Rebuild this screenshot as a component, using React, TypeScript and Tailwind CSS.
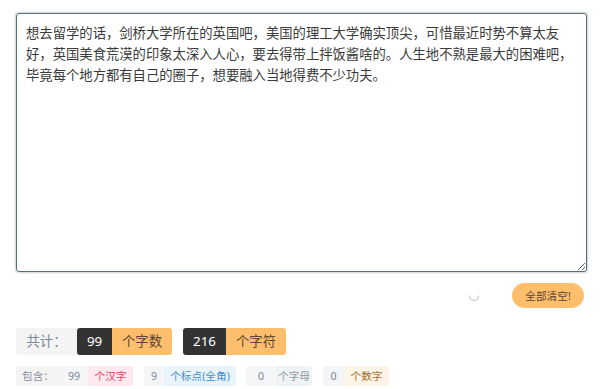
import React from "react";

const TEXT =
  "想去留学的话，剑桥大学所在的英国吧，美国的理工大学确实顶尖，可惜最近时势不算太友好，英国美食荒漠的印象太深入人心，要去得带上拌饭酱啥的。人生地不熟是最大的困难吧，毕竟每个地方都有自己的圈子，想要融入当地得费不少功夫。";

const font = { fontFamily: '"Noto Sans", "Noto Sans CJK SC", sans-serif' };

export default function App() {
  return (
    <div className="w-[600px] h-[389px] bg-white pt-[13px] pl-[16px]" style={font}>
      <textarea
        defaultValue={TEXT}
        className="block w-[571px] h-[259px] rounded-[3px] border border-[#56707a] shadow-[0_0_2px_1px_rgba(60,80,90,0.25)] px-[9px] py-[8px] text-[13.33px] leading-[21px] text-[#3a3a3a] outline-none"
        style={{ fontFamily: '"Noto Sans CJK SC", "Noto Sans", sans-serif' }}
      />
      <div className="flex items-center justify-end w-[568px] mt-[11px] gap-[32px]">
        <svg width="12" height="12" viewBox="0 0 12 12" className="mt-[1px]">
          <path d="M1.5 6 A4.5 4.5 0 0 0 10.5 6" fill="none" stroke="#d4d6d9" strokeWidth="1.6" strokeLinecap="round" />
        </svg>
        <button className="w-[72px] h-[25px] rounded-full bg-[#ffbe6b] text-[10.67px] text-[#5a4530] flex items-center justify-center">
          全部清空!
        </button>
      </div>
      <div className="flex items-center mt-[20px] h-[27px] text-[13.33px]">
        <div className="h-full w-[61px] flex items-center justify-center bg-[#f4f4f5] text-[#7a8796] rounded-l-[3px]">共计：</div>
        <div className="h-full w-[35px] flex items-center justify-center bg-[#333333] text-white rounded-l-[3px]">99</div>
        <div className="h-full w-[60px] flex items-center justify-center bg-[#ffbe6b] text-[#5a4530] rounded-r-[3px]">个字数</div>
        <div className="h-full w-[43px] ml-[11px] flex items-center justify-center bg-[#333333] text-white rounded-l-[3px]">216</div>
        <div className="h-full w-[60px] flex items-center justify-center bg-[#ffbe6b] text-[#5a4530] rounded-r-[3px]">个字符</div>
      </div>
      <div className="flex items-center mt-[11px] h-[20px] text-[10.67px]">
        <div className="h-full w-[44px] flex items-center justify-center bg-[#f4f4f5] text-[#8a8f99] rounded-[3px]">包含：</div>
        <div className="h-full w-[28px] flex items-center justify-center bg-[#f4f5f7] text-[#7d8899] rounded-l-[3px]">99</div>
        <div className="h-full w-[45px] flex items-center justify-center bg-[#fde9ee] text-[#e2425e] rounded-r-[3px]">个汉字</div>
        <div className="h-full w-[20px] ml-[11px] flex items-center justify-center bg-[#f4f5f7] text-[#7d8899] rounded-l-[3px]">9</div>
        <div className="h-full w-[72px] flex items-center justify-center bg-[#eaf4fc] text-[#3d8ccd] rounded-r-[3px]">个标点(全角)</div>
        <div className="h-full w-[30px] ml-[10px] flex items-center justify-center bg-[#f4f5f7] text-[#7d8899] rounded-l-[3px]">0</div>
        <div className="h-full w-[36px] flex items-center justify-center bg-[#eff3f5] text-[#8c9aa4] rounded-r-[3px]">个字母</div>
        <div className="h-full w-[21px] ml-[11px] flex items-center justify-center bg-[#f4f5f7] text-[#7d8899] rounded-l-[3px]">0</div>
        <div className="h-full w-[45px] flex items-center justify-center bg-[#fdf4e8] text-[#a26f2c] rounded-r-[3px]">个数字</div>
      </div>
    </div>
  );
}
